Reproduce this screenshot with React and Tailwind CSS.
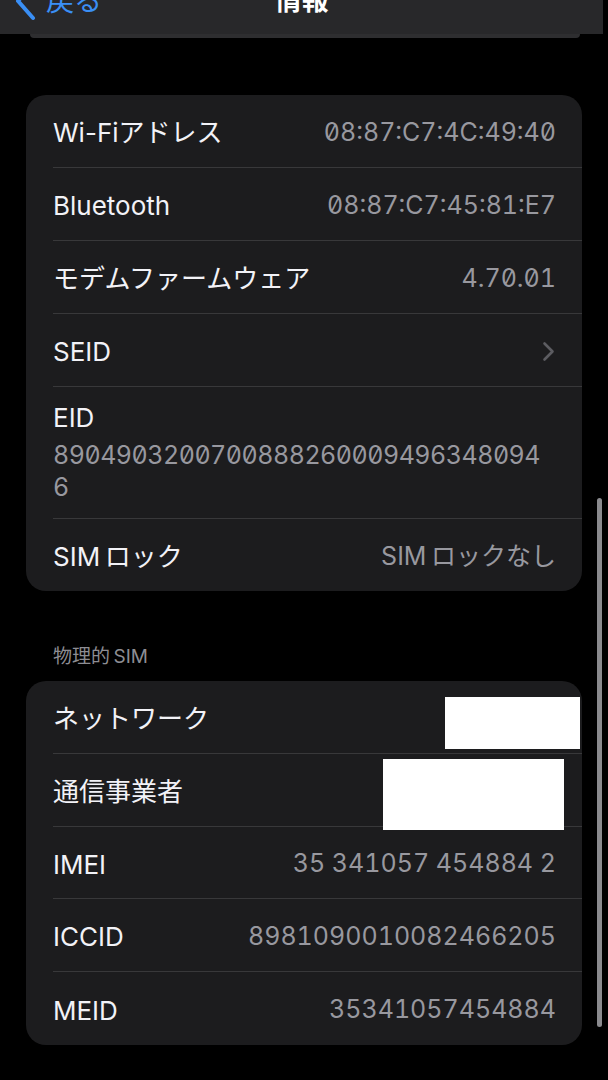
import React from "react";

const font = { fontFamily: '"Inter", "Noto Sans CJK JP", sans-serif' };

const Separator = ({ first }) => (first ? "" : "border-t border-[#38383a]");

// Row in a grouped list: inset separator, label on the left, value on the right
const Row = ({ label, value, first, mono, chevron, h = "h-[73px]" }) => (
  <div className="pl-[27px]">
    <div
      className={`flex items-center justify-between pr-[26px] pt-[3px] ${h} ${Separator({ first })}`}
    >
      <span className="text-[26px] text-[#f2f2f7]">{label}</span>
      {value && (
        <span
          className={`text-[25px] text-[#98989f] tabular-nums ${mono ? "slashed-zero" : ""}`}
        >
          {value}
        </span>
      )}
      {chevron && (
        <svg width="13" height="21" viewBox="0 0 13 21" fill="none" className="mr-[1px]">
          <path
            d="M2.5 2.5 L10.5 10.5 L2.5 18.5"
            stroke="#5c5c61"
            strokeWidth="2.6"
            strokeLinecap="round"
            strokeLinejoin="round"
          />
        </svg>
      )}
    </div>
  </div>
);

export default function App() {
  return (
    <div className="relative w-[608px] h-[1080px] bg-black overflow-hidden" style={font}>
      {/* Nav bar, top of it is cut off by the screenshot */}
      <div className="w-[603px] h-[34px] bg-[#28282a] overflow-hidden">
        <div className="grid grid-cols-3 items-center h-[48px] -mt-[23px]">
          <div className="flex items-center pl-[14px] gap-[10px] text-[#3a8ff5]">
            <svg width="22" height="40" viewBox="0 0 22 40" fill="none">
              <path
                d="M19 3 L4 20 L19 37"
                stroke="#3a8ff5"
                strokeWidth="4"
                strokeLinecap="round"
                strokeLinejoin="round"
              />
            </svg>
            <span className="text-[28px]">戻る</span>
          </div>
          <div className="text-center text-[27px] font-bold text-white">情報</div>
          <div />
        </div>
      </div>
      <div className="mx-[30px] w-[550px] h-[4px] bg-[#2e2e30] rounded-b-[6px]" />

      {/* Device info group */}
      <div className="mx-[26px] mt-[57px] bg-[#1c1c1e] rounded-[20px] overflow-hidden">
        <Row first h="h-[72px]" label="Wi-Fiアドレス" value="08:87:C7:4C:49:40" mono />
        <Row label="Bluetooth" value="08:87:C7:45:81:E7" mono />
        <Row label="モデムファームウェア" value="4.70.01" mono />
        <Row label="SEID" chevron />
        <div className="pl-[27px]">
          <div className="border-t border-[#38383a] pt-[15px] pb-[15px] pr-[26px]">
            <div className="text-[26px] leading-[32px] text-[#f2f2f7]">EID</div>
            <div className="mt-[5px] text-[25px] leading-[32px] tracking-[-0.5px] text-[#98989f] tabular-nums slashed-zero">
              8904903200700888260009496348094
              <br />6
            </div>
          </div>
        </div>
        <Row label={"SIM\u2009ロック"} value={"SIM\u2009ロックなし"} />
      </div>

      {/* Physical SIM group */}
      <div className="mx-[53px] mt-[54px] mb-[12px] text-[19px] leading-[24px] text-[#8d8d93]">
        {"物理的\u2009SIM"}
      </div>
      <div className="relative mx-[26px] bg-[#1c1c1e] rounded-[20px]">
        <Row first h="h-[72px]" label="ネットワーク" />
        <Row label="通信事業者" />
        <Row h="h-[72px]" label="IMEI" value="35 341057 454884 2" />
        <Row label="ICCID" value="8981090010082466205" />
        <Row h="h-[74px]" label="MEID" value="35341057454884" />

        {/* redaction boxes */}
        <div className="absolute left-[419px] top-[16px] w-[135px] h-[52px] bg-white" />
        <div className="absolute left-[357px] top-[78px] w-[181px] h-[71px] bg-white" />
      </div>

      {/* scroll indicator */}
      <div className="absolute right-[6px] top-[498px] w-[5px] h-[529px] rounded-full bg-[#8a8a8e]" />
    </div>
  );
}
